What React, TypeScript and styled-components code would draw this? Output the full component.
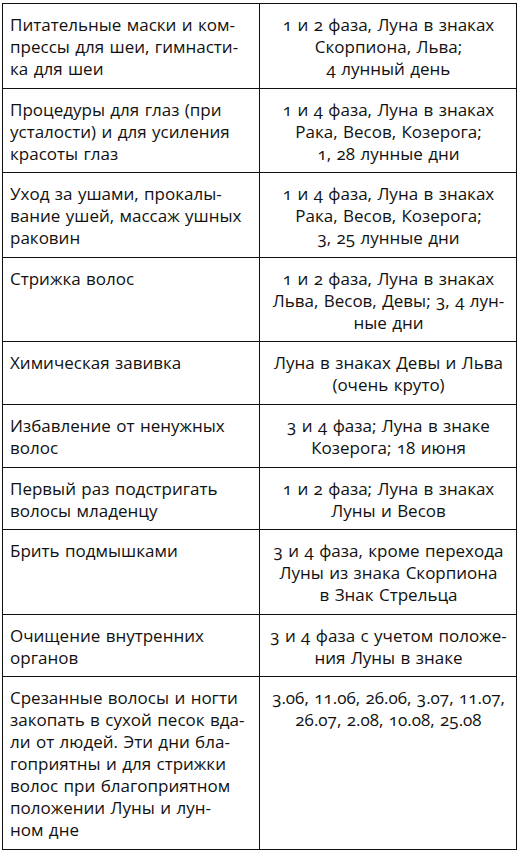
import React from "react";
import styled, { createGlobalStyle } from "styled-components";

const Global = createGlobalStyle`
  html, body { margin: 0; padding: 0; background: #ffffff; }
  body { font-family: "Open Sans", "Liberation Sans", sans-serif; color: #111; }
`;

const Page = styled.div`
  padding: 3px 0 0 2px;
`;

const Table = styled.table`
  border-collapse: collapse;
  table-layout: fixed;
  width: 514px;
`;

const Cell = styled.td<{ $center?: boolean }>`
  border: 1px solid #111;
  vertical-align: top;
  padding: 10px 6px 7.6px 7px;
  font-size: 17px;
  line-height: 22px;
  text-align: ${(p) => (p.$center ? "center" : "left")};
  font-variant-numeric: oldstyle-nums;
  white-space: nowrap;
  word-spacing: 1px;
`;

const Line = styled.span`
  display: block;
`;

type Row = [string[], string[]];

const rows: Row[] = [
  [
    ["Питательные маски и ком-", "прессы для шеи, гимнасти-", "ка для шеи"],
    ["1 и 2 фаза, Луна в знаках", "Скорпиона, Льва;", "4 лунный день"],
  ],
  [
    ["Процедуры для глаз (при", "усталости) и для усиления", "красоты глаз"],
    ["1 и 4 фаза, Луна в знаках", "Рака, Весов, Козерога;", "1, 28 лунные дни"],
  ],
  [
    ["Уход за ушами, прокалы-", "вание ушей, массаж ушных", "раковин"],
    ["1 и 4 фаза, Луна в знаках", "Рака, Весов, Козерога;", "3, 25 лунные дни"],
  ],
  [
    ["Стрижка волос"],
    ["1 и 2 фаза, Луна в знаках", "Льва, Весов, Девы; 3, 4 лун-", "ные дни"],
  ],
  [["Химическая завивка"], ["Луна в знаках Девы и Льва", "(очень круто)"]],
  [
    ["Избавление от ненужных", "волос"],
    ["3 и 4 фаза; Луна в знаке", "Козерога; 18 июня"],
  ],
  [
    ["Первый раз подстригать", "волосы младенцу"],
    ["1 и 2 фаза; Луна в знаках", "Луны и Весов"],
  ],
  [
    ["Брить подмышками"],
    ["3 и 4 фаза, кроме перехода", "Луны из знака Скорпиона", "в Знак Стрельца"],
  ],
  [
    ["Очищение внутренних", "органов"],
    ["3 и 4 фаза с учетом положе-", "ния Луны в знаке"],
  ],
  [
    [
      "Срезанные волосы и ногти",
      "закопать в сухой песок вда-",
      "ли от людей. Эти дни бла-",
      "гоприятны и для стрижки",
      "волос при благоприятном",
      "положении Луны и лун-",
      "ном дне",
    ],
    ["3.06, 11.06, 26.06, 3.07, 11.07,", "26.07, 2.08, 10.08, 25.08"],
  ],
];

export default function App() {
  return (
    <Page>
      <Global />
      <Table>
        <colgroup>
          <col style={{ width: 257 }} />
          <col style={{ width: 257 }} />
        </colgroup>
        <tbody>
          {rows.map(([left, right], i) => (
            <tr key={i}>
              <Cell>
                {left.map((l, j) => (
                  <Line key={j}>{l}</Line>
                ))}
              </Cell>
              <Cell $center>
                {right.map((l, j) => (
                  <Line key={j}>{l}</Line>
                ))}
              </Cell>
            </tr>
          ))}
        </tbody>
      </Table>
    </Page>
  );
}
